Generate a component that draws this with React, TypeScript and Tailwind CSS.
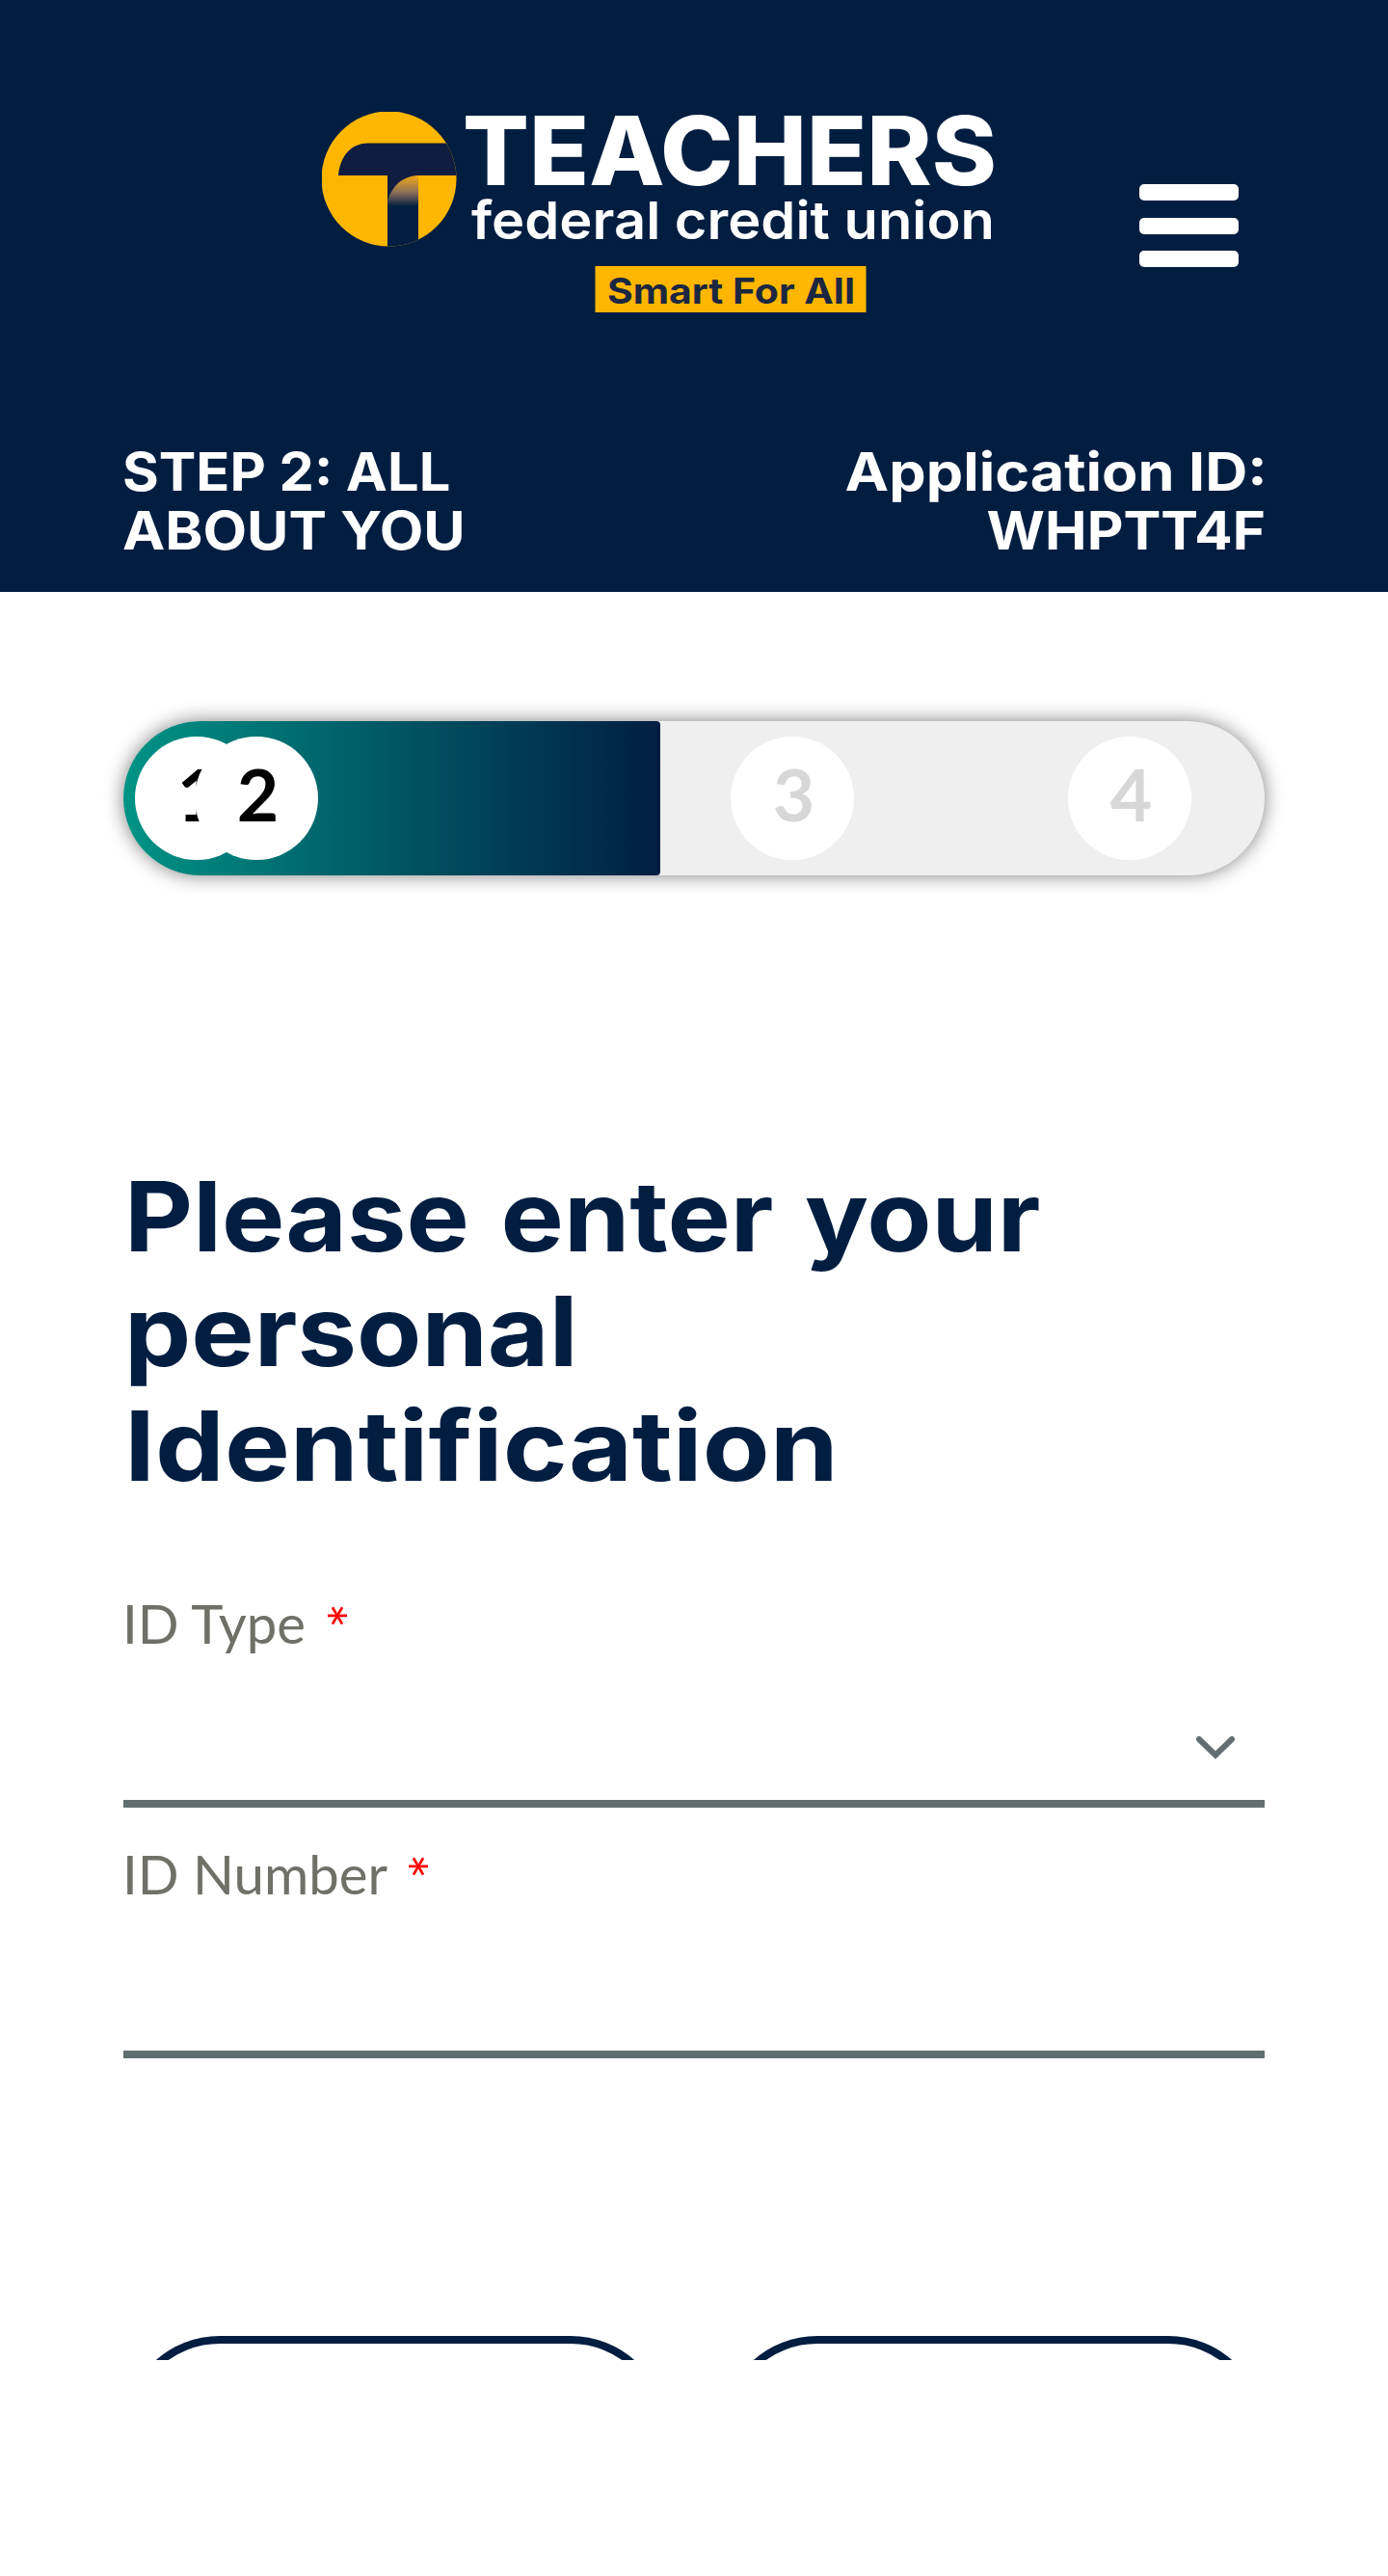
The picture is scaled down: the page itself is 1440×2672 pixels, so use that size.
import React from "react";

function Logo() {
  return (
    <svg width="700" height="208" viewBox="0 0 700 208" className="block overflow-hidden" role="img" aria-label="Teachers federal credit union">
      <defs>
        <linearGradient id="stem" x1="0" y1="68" x2="0" y2="98" gradientUnits="userSpaceOnUse">
          <stop offset="0" stopColor="#e6a21a" />
          <stop offset="0.5" stopColor="#92725a" />
          <stop offset="1" stopColor="#011e41" />
        </linearGradient>
        <clipPath id="disc">
          <circle cx="69.5" cy="69.5" r="70" />
        </clipPath>
      </defs>
      <g clipPath="url(#disc)">
        <rect width="140" height="140" fill="#ffb600" />
        <rect x="68" y="66" width="32" height="80" fill="url(#stem)" />
        <path d="M17 66C19 46 30 32.5 48 32.5H142V66H98C82 68 74 76 68 92V66Z" fill="#101d41" />
      </g>
      <g fontFamily="Inter, sans-serif" fill="#ffffff">
        <text x="146" y="75.5" fontSize="99" fontWeight="800" textLength="554" lengthAdjust="spacingAndGlyphs">TEACHERS</text>
        <text x="155" y="132" fontSize="54" fontWeight="600" textLength="543" lengthAdjust="spacingAndGlyphs">federal credit union</text>
      </g>
      <rect x="283.5" y="160" width="281" height="48" fill="#ffb600" />
      <text x="296" y="199" fontFamily="Inter, sans-serif" fontSize="37" fontWeight="700" fill="#1b2740" textLength="257" lengthAdjust="spacingAndGlyphs">Smart For All</text>
    </svg>
  );
}

function Step({ n, active = false, className = "" }: { n: number; active?: boolean; className?: string }) {
  return (
    <div
      className={`flex size-32 shrink-0 items-center justify-center rounded-full bg-white pb-[10px] pl-[3px] font-['Lato',sans-serif] text-[75px] font-bold leading-none ${active ? "text-black" : "text-[#d7d7d7]"} ${className}`}
    >
      {n}
    </div>
  );
}

function Field({ label, select = false }: { label: string; select?: boolean }) {
  return (
    <div className="flex h-[260px] flex-col">
      <div className="-ml-px flex h-[66px] items-start font-['Lato',sans-serif] text-[55.5px] leading-[66px] text-[#6f7068]">
        <label className="origin-left scale-x-[1.015] whitespace-nowrap">{label}</label>
        <span className="ml-[25px] mt-[14px] flex size-[22px] rotate-90 items-center justify-center text-[62px] leading-none text-[#ff0000]">
          <span className="pt-[26px]">*</span>
        </span>
      </div>
      <div className="flex h-[158px] items-center justify-end border-b-8 border-[#626f70] pr-[28px]">
        {select && (
          <svg width="46" height="30" viewBox="0 0 46 30" className="mt-[42px]" fill="none" stroke="#626f70" strokeWidth="6" strokeLinecap="round">
            <path d="M6 6L23 22.5L40 6" />
          </svg>
        )}
      </div>
    </div>
  );
}

export default function App() {
  return (
    <div className="h-[2672px] w-[1440px] overflow-hidden bg-white font-['Inter',sans-serif]">
      <header className="flex h-[614px] flex-col bg-[#011e41] px-32 pt-[116px] text-white">
        <div className="flex pl-[206px]">
          <Logo />
          <button aria-label="Menu" className="ml-[148px] mt-[75px] flex h-[86px] w-[103px] flex-col justify-between">
            <span className="h-[17px] w-full rounded-[5px] bg-white" />
            <span className="h-[17px] w-full rounded-[5px] bg-white" />
            <span className="h-[17px] w-full rounded-[5px] bg-white" />
          </button>
        </div>
        <div className="mt-[134.5px] flex justify-between whitespace-nowrap text-[55px] font-bold leading-[61px]">
          <div className="-ml-[1.5px] flex flex-col items-start">
            <span className="origin-left scale-x-[1.05]">STEP 2: ALL</span>
            <span className="origin-left scale-x-[1.077]">ABOUT YOU</span>
          </div>
          <div className="flex flex-col items-end text-right">
            <span className="-mr-[2.5px] origin-right scale-x-[1.11]">Application ID:</span>
            <span className="-mr-px origin-right scale-x-[1.06]">WHPTT4F</span>
          </div>
        </div>
      </header>

      <main className="px-32 pt-[134px]">
        <div className="flex h-[160px] items-center rounded-full bg-[#efefef] shadow-[0_0_20px_#808080]">
          <div className="flex h-full w-[557px] items-center rounded-l-[80px] rounded-r-[4px] bg-linear-to-r from-[#009485] to-[#011e41] pl-3">
            <Step n={1} active />
            <Step n={2} active className="-ml-[66px]" />
          </div>
          <Step n={3} className="ml-[73px]" />
          <Step n={4} className="ml-[222px]" />
        </div>

        <h1 className="mt-[294px] flex flex-col items-start whitespace-nowrap pl-px text-[101px] font-bold leading-[119px] text-[#011e41]">
          <span className="origin-left scale-x-[1.087] [word-spacing:6px]">Please enter your</span>
          <span className="origin-left scale-x-[1.088]">personal</span>
          <span className="origin-left scale-x-[1.129]">Identification</span>
        </h1>

        <form className="mt-[92px]">
          <Field label="ID Type" select />
          <Field label="ID Number" />
        </form>

        <div className="mt-[252px] flex h-[25px] justify-between overflow-hidden">
          <button aria-label="Back" className="h-[200px] w-[564px] rounded-[100px] border-8 border-[#011e41]" />
          <button aria-label="Next" className="h-[200px] w-[564px] rounded-[100px] border-8 border-[#011e41]" />
        </div>
      </main>
    </div>
  );
}
